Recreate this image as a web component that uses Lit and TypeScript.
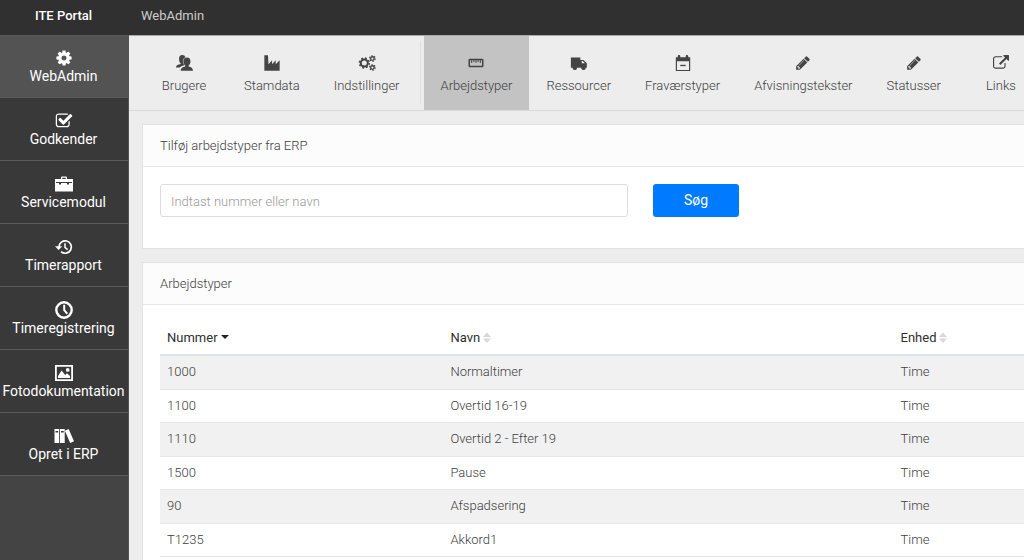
import { LitElement, html, css, svg } from "lit";
import { customElement, state } from "lit/decorators.js";
import { classMap } from "lit/directives/class-map.js";

// Icons on a 1792-unit grid
const large = {
  cog: svg`<path d="M1152 896q0-106-75-181t-181-75-181 75-75 181 75 181 181 75 181-75 75-181zm512-109v222q0 12-8 23t-20 13l-185 28q-19 54-39 91 35 50 107 138 10 12 10 25t-9 23q-27 37-99 108t-94 71q-12 0-26-9l-138-108q-44 23-91 38-16 136-29 186-7 28-36 28h-222q-14 0-24.5-8.5t-11.5-21.5l-28-184q-49-16-90-37l-141 107q-10 9-25 9-14 0-25-11-126-114-165-168-7-10-7-23 0-12 8-23 15-21 51-66.5t54-70.5q-27-50-41-99l-183-27q-13-2-21-12.5t-8-23.5v-222q0-12 8-23t19-13l186-28q14-46 39-92-40-57-107-138-10-12-10-24 0-10 9-23 26-36 98.5-107.5t94.5-71.5q13 0 26 10l138 107q44-23 91-38 16-136 29-186 7-28 36-28h222q14 0 24.5 8.5t11.5 21.5l28 184q49 16 90 37l142-107q9-9 24-9 13 0 25 10 129 119 165 170 7 8 7 22 0 12-8 23-15 21-51 66.5t-54 70.5q26 50 41 98l183 28q13 2 21 12.5t8 23.5z"/>`,
  check: svg`<path d="M1472 930v318q0 119-84.5 203.5t-203.5 84.5h-832q-119 0-203.5-84.5t-84.5-203.5v-832q0-119 84.5-203.5t203.5-84.5h832q63 0 117 25 15 7 18 23 3 17-9 29l-49 49q-10 10-23 10-3 0-9-2-23-6-45-6h-832q-66 0-113 47t-47 113v832q0 66 47 113t113 47h832q66 0 113-47t47-113v-254q0-13 9-22l64-64q10-10 23-10 6 0 12 3 20 8 20 29zm231-489l-814 814q-24 24-57 24t-57-24l-430-430q-24-24-24-57t24-57l110-110q24-24 57-24t57 24l263 263 647-647q24-24 57-24t57 24l110 110q24 24 24 57t-24 57z"/>`,
  pencil: svg`<path d="M491 1536l91-91-235-235-91 91v107h128v128h107zm523-928q0-22-22-22-10 0-17 7l-542 542q-7 7-7 17 0 22 22 22 10 0 17-7l542-542q7-7 7-17zm-54-192l416 416-832 832h-416v-416zm683 96q0 53-37 90l-166 166-416-416 166-165q36-38 90-38 53 0 91 38l235 234q37 39 37 91z"/>`,
  external: svg`<path d="M1408 928v320q0 119-84.5 203.5t-203.5 84.5h-832q-119 0-203.5-84.5t-84.5-203.5v-832q0-119 84.5-203.5t203.5-84.5h704q14 0 23 9t9 23v64q0 14-9 23t-23 9h-704q-66 0-113 47t-47 113v832q0 66 47 113t113 47h832q66 0 113-47t47-113v-320q0-14 9-23t23-9h64q14 0 23 9t9 23zm384-864v512q0 26-19 45t-45 19-45-19l-176-176-652 652q-10 10-23 10t-23-10l-114-114q-10-10-10-23t10-23l652-652-176-176q-19-19-19-45t19-45 45-19h512q26 0 45 19t19 45z"/>`,
};

// Icons on a 20-unit grid
const small = {
  briefcase: svg`<path fill-rule="evenodd" d="M7 5V3.8C7 3 7.600 2.500 8.300 2.500h3.400c.7 0 1.300.5 1.300 1.300V5h6v12.500H1V5zM8.300 5h3.400V3.800H8.300zM2 8v1h3v1.500h2V9h6v1.500h2V9h3V8z"/>`,
  history: svg`<path fill="none" stroke="currentColor" stroke-width="1.700" d="M5 10a6.200 6.200 0 1 1 2 4.600"/><path d="M1 9.300h7.200L4.600 13z"/><path fill="none" stroke="currentColor" stroke-width="1.500" d="M11 6.200v4.200l2.600 2.200"/>`,
  clock: svg`<circle cx="10" cy="10" r="7.700" fill="none" stroke="currentColor" stroke-width="2.400"/><path d="M9.200 4.800h2v5l2.800 3.200-1.400 1.400-3.400-3.900z"/>`,
  image: svg`<path fill-rule="evenodd" d="M1 2h18v16H1zM2.800 3.800v12.400h14.400V3.800z"/><path d="M4 15v-2l3.600-5.500 3.600 4.400 1.800-1.600L16 13v2z"/><circle cx="13.700" cy="6.900" r="1.900"/>`,
  books: svg`<path fill-rule="evenodd" d="M.5 3h4.700v14H.5zM1.500 5v1.400h2.700V5zM6 3h4.700v14H6zM7 5v1.400h2.700V5z"/><path d="M10.800 4.800l3.800-1.700L20 15.300 16.200 17z"/>`,
  users: svg`<path d="M8 1.200c2 0 3.200 1 3.500 2.400-1.800.9-2.500 2.600-2.300 4.700.1 1.500.7 2.600 1.300 3.400l-.2.800c-2.300.5-4.200 1.300-5 2.600H1c.2-2.500 2.500-3.300 5.200-3.900v-.8C5 9.300 4.500 7.800 4.500 5.600 4.500 3 5.600 1.200 8 1.200z"/><path stroke="#ededed" stroke-width=".8" paint-order="stroke" d="M13.300 3.800c2.700 0 3.900 1.800 3.900 4.300 0 2-.8 3.600-2 4.700v1c2.600.5 4.600 1.600 4.800 4.700H6.200c.2-3.100 2.500-4.200 5.100-4.700v-1c-1.200-1.100-2-2.700-2-4.700 0-2.500 1.300-4.300 4-4.300z"/>`,
  industry: svg`<path d="M1.500 1.500h4l.6 10 4-4.500v4.500l4-4.500v4.500L18.500 7v11.500h-17z"/>`,
  cogs: svg`<g fill="none" stroke="currentColor"><circle cx="7" cy="10" r="3.900" stroke-width="2.200"/><circle cx="7" cy="10" r="5.500" stroke-width="1.600" stroke-dasharray="2.160 2.160"/><circle cx="16" cy="5" r="2" stroke-width="1.500"/><circle cx="16" cy="5" r="3.100" stroke-width="1.200" stroke-dasharray="1.620 1.620"/><circle cx="16" cy="15" r="2" stroke-width="1.500"/><circle cx="16" cy="15" r="3.100" stroke-width="1.200" stroke-dasharray="1.620 1.620"/></g>`,
  ruler: svg`<rect x="2.500" y="6" width="15" height="8" rx=".8" fill="none" stroke="currentColor" stroke-width="1.700"/><path fill="none" stroke="currentColor" stroke-width="1.100" d="M5.200 6v4M7.600 6v3M10 6v4M12.400 6v3M14.800 6v4"/>`,
  truck: svg`<path fill-rule="evenodd" d="M1 4h10.500v2.600H15l3.700 3.700v5h-1.500a2.300 2.300 0 0 1-4.500 0H7.600a2.300 2.300 0 0 1-4.500 0H1zM13 7.900v2.500h3.700l-2.500-2.500z"/><circle cx="5.350" cy="15.700" r="2.200"/><circle cx="15" cy="15.700" r="2.200"/>`,
  calendar: svg`<path fill-rule="evenodd" d="M2 3.500h2.200V2.600c0-1.900 2.800-1.900 2.800 0v.9h6v-.9c0-1.900 2.800-1.900 2.800 0v.9H18V19H2zM3.300 8v9.700h13.400V8z"/><path d="M7 12h6v1.500H7z"/>`,
};

const icon = (name: string) =>
  name in large
    ? html`<svg class="icon" viewBox="-112 -112 2016 2016" fill="currentColor" aria-hidden="true">${large[name as keyof typeof large]}</svg>`
    : html`<svg class="icon" viewBox="0 0 20 20" fill="currentColor" aria-hidden="true">${small[name as keyof typeof small]}</svg>`;

const modules = [
  ["cog", "WebAdmin"],
  ["check", "Godkender"],
  ["briefcase", "Servicemodul"],
  ["history", "Timerapport"],
  ["clock", "Timeregistrering"],
  ["image", "Fotodokumentation"],
  ["books", "Opret i ERP"],
];

const general = [
  ["users", "Brugere"],
  ["industry", "Stamdata"],
  ["cogs", "Indstillinger"],
];

const registers = [
  ["ruler", "Arbejdstyper"],
  ["truck", "Ressourcer"],
  ["calendar", "Fraværstyper"],
  ["pencil", "Afvisningstekster"],
  ["pencil", "Statusser"],
  ["external", "Links"],
];

const rows = [
  ["1000", "Normaltimer", "Time"],
  ["1100", "Overtid 16-19", "Time"],
  ["1110", "Overtid 2 - Efter 19", "Time"],
  ["1500", "Pause", "Time"],
  ["90", "Afspadsering", "Time"],
  ["T1235", "Akkord1", "Time"],
];

@customElement("app-root")
export class AppRoot extends LitElement {
  @state() private sorted = 0;

  static styles = css`
    :host {
      display: grid;
      grid-template-columns: 129px minmax(0, 1fr);
      grid-template-rows: 35px 1fr;
      height: 100vh;
      overflow: hidden;
      background: #ededed;
      color: #404040;
      font: 300 13px/20px Roboto, sans-serif;
    }
    * { box-sizing: border-box; }
    a { color: inherit; text-decoration: none; }
    .icon { display: block; width: 18px; height: 18px; }
    .top {
      grid-column: 1 / -1;
      display: grid;
      grid-template-columns: 129px 1fr;
      background: #303030;
      line-height: 32px;
    }
    .brand { padding-right: 2px; text-align: center; color: #fff; font-weight: 500; }
    .where { padding-left: 12px; color: #ccc; font-weight: 400; }
    .side { background: #444; border-right: 1px solid #555; }
    .module {
      display: flex;
      flex-direction: column;
      align-items: center;
      height: 63px;
      padding-top: 13px;
      padding-right: 1px;
      background: #393939;
      border-bottom: 1px solid #5a5a5a;
      color: #fff;
      font-size: 14px;
      font-weight: 400;
      line-height: 17px;
      white-space: nowrap;
    }
    .module .icon { width: 20px; height: 20px; }
    .module.active { background: #535353; border-top: 1px solid #5a5a5a; padding-top: 12px; }
    .main { min-width: 0; overflow: hidden; }
    .tabs {
      display: flex;
      height: 76px;
      padding-left: 12px;
      border-top: 1px solid #aaa;
      border-bottom: 1px solid #d9d9d9;
    }
    .tab {
      display: flex;
      flex: none;
      flex-direction: column;
      align-items: center;
      gap: 4px;
      min-width: 86px;
      padding: 18px 17px 0;
    }
    .tab.active { background: #c3c3c3; }
    .tab .icon { color: #444; }
    .rule { flex: none; width: 1px; margin: 5px 3px 6px; background: #e0e0e0; }
    .panels { display: grid; gap: 13px; padding: 13px 0 13px 13px; }
    .panel { border: 1px solid #e2e2e2; border-right: 0; background: #fff; }
    .title {
      margin: 0;
      padding: 11px 17px 10px;
      border-bottom: 1px solid #e8e8e8;
      background: #fcfcfc;
      font: inherit;
    }
    .search { display: flex; gap: 25px; padding: 17px 17px 31px; }
    .field {
      flex: 0 1 468px;
      min-width: 0;
      height: 33px;
      padding: 1px 10px 0;
      border: 1px solid #d9dde1;
      border-radius: 3px;
      background: #fff;
      color: #404040;
      font: inherit;
    }
    .field::placeholder { color: #999; opacity: 1; }
    .go {
      width: 86px;
      height: 33px;
      padding: 0 0 2px;
      border: 0;
      border-radius: 3px;
      background: #007bff;
      color: #fff;
      font: 400 14px/20px Roboto, sans-serif;
    }
    .list { padding: 17px 0 17px 17px; }
    .table { width: 100%; border-collapse: separate; border-spacing: 0; table-layout: fixed; }
    .number { width: 32.8%; }
    .name { width: 52.1%; }
    th, td { padding: 0 7px; text-align: left; }
    th { height: 34px; border-bottom: 2px solid #e0e4e8; font-weight: 400; }
    td { height: 33px; padding-bottom: 1px; border-bottom: 1px solid #e4e6e8; }
    tr:nth-child(odd) td { height: 34px; background: #f1f1f1; }
    .sort {
      display: inline-flex;
      align-items: center;
      gap: 3px;
      padding: 0;
      border: 0;
      background: none;
      color: #2f2f2f;
      font: inherit;
    }
    .arrows { width: 8px; height: 12px; fill: #d8d8d8; }
    .arrows.on { fill: #222; }
  `;

  private tab([name, label]: string[]) {
    const active = label === "Arbejdstyper";
    return html`<a href="#" class=${classMap({ tab: true, active })}>${icon(name)}<span>${label}</span></a>`;
  }

  private header(label: string, index: number) {
    const on = this.sorted === index;
    return html`<th scope="col">
      <button class="sort" type="button" @click=${() => (this.sorted = index)}>
        ${label}
        <svg class=${classMap({ arrows: true, on })} viewBox="0 0 8 12" aria-hidden="true">
          ${on ? svg`<path d="M0 3h8L4 7z"/>` : svg`<path d="M0 5h8L4 .500zM0 6.500h8L4 11z"/>`}
        </svg>
      </button>
    </th>`;
  }

  render() {
    return html`
      <header class="top"><a href="#" class="brand">ITE Portal</a><span class="where">WebAdmin</span></header>
      <nav class="side">
        ${modules.map(
          ([name, label], i) =>
            html`<a href="#" class=${classMap({ module: true, active: i === 0 })}>${icon(name)}<span>${label}</span></a>`
        )}
      </nav>
      <main class="main">
        <nav class="tabs">
          ${general.map((t) => this.tab(t))}
          <span class="rule"></span>
          ${registers.map((t) => this.tab(t))}
        </nav>
        <div class="panels">
          <section class="panel">
            <h2 class="title"><label for="query">Tilføj arbejdstyper fra ERP</label></h2>
            <form class="search" @submit=${(e: Event) => e.preventDefault()}>
              <input class="field" id="query" type="text" placeholder="Indtast nummer eller navn" />
              <button class="go" type="submit">Søg</button>
            </form>
          </section>
          <section class="panel">
            <h2 class="title">Arbejdstyper</h2>
            <div class="list">
              <table class="table">
                <colgroup><col class="number" /><col class="name" /><col /></colgroup>
                <thead><tr>${["Nummer", "Navn", "Enhed"].map((l, i) => this.header(l, i))}</tr></thead>
                <tbody>${rows.map((r) => html`<tr>${r.map((c) => html`<td>${c}</td>`)}</tr>`)}</tbody>
              </table>
            </div>
          </section>
        </div>
      </main>
    `;
  }
}
